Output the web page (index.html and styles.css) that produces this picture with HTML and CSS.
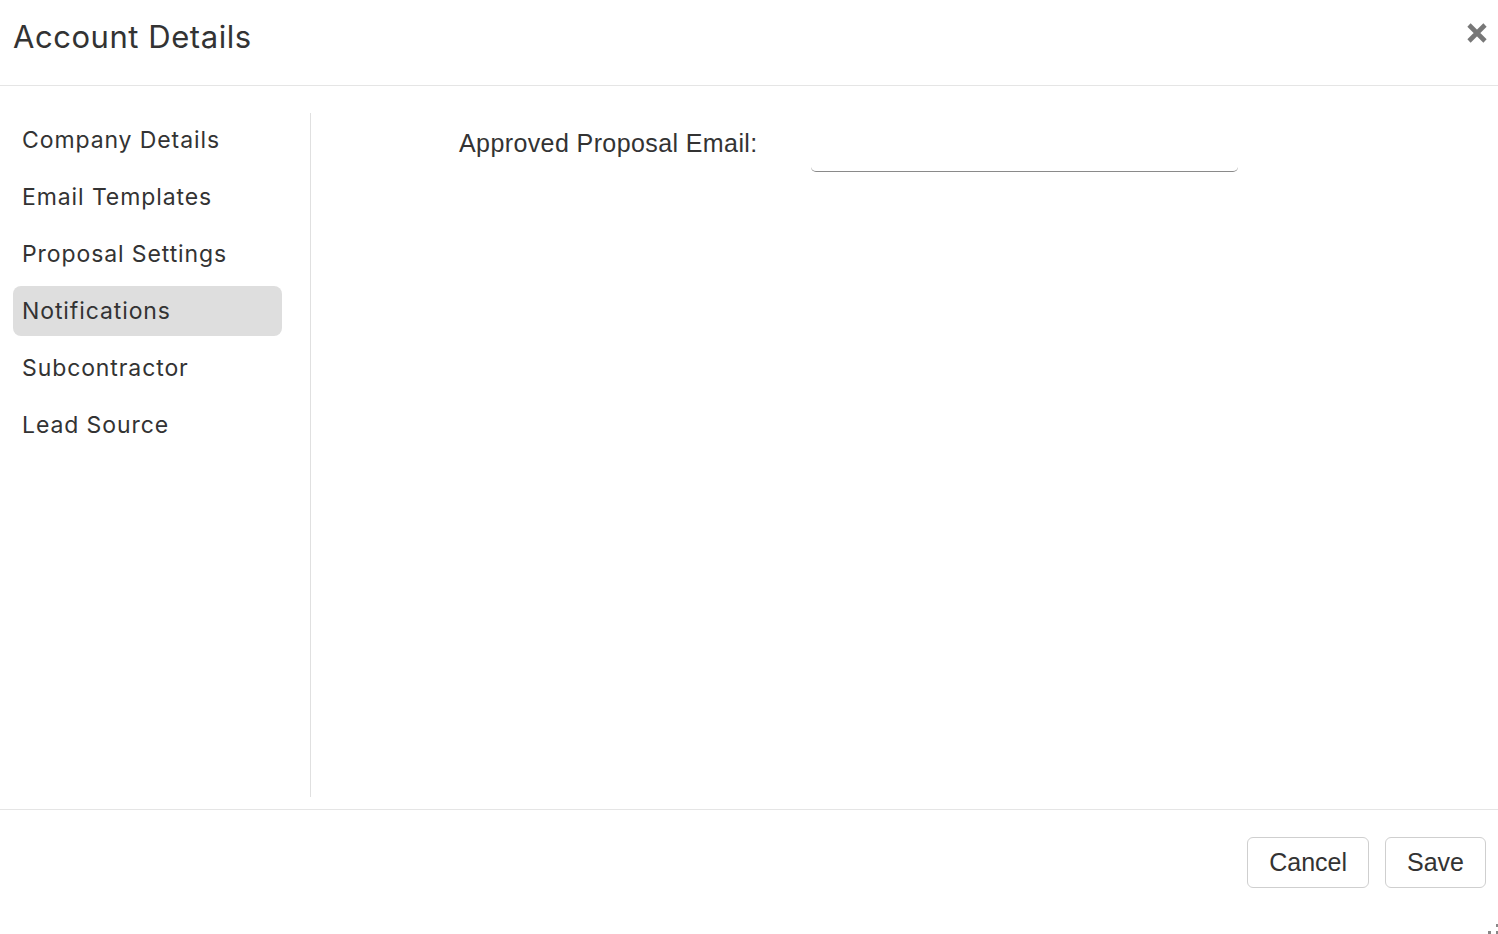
FILE: index.html
```html
<!DOCTYPE html>
<html lang="en">
<head>
<meta charset="utf-8">
<title>Account Details</title>
<link rel="stylesheet" href="styles.css">
</head>
<body>
<div class="modal">
  <header class="modal-header">
    <h1 class="modal-title">Account Details</h1>
    <button class="close-btn" aria-label="Close">
      <svg viewBox="0 0 22 22" width="22" height="22"><path d="M3 3 L19 19 M19 3 L3 19" stroke="#777" stroke-width="4.6" stroke-linecap="butt" fill="none"/></svg>
    </button>
  </header>
  <div class="modal-body">
    <nav class="sidebar">
      <ul class="nav-list">
        <li class="nav-item">Company Details</li>
        <li class="nav-item">Email Templates</li>
        <li class="nav-item">Proposal Settings</li>
        <li class="nav-item active">Notifications</li>
        <li class="nav-item">Subcontractor</li>
        <li class="nav-item">Lead Source</li>
      </ul>
    </nav>
    <section class="content">
      <div class="form-row">
        <label class="form-label" for="approved-email">Approved Proposal Email:</label>
        <input class="form-input" id="approved-email" type="text">
      </div>
    </section>
  </div>
  <footer class="modal-footer">
    <button class="btn">Cancel</button>
    <button class="btn">Save</button>
    <span class="grip"></span>
  </footer>
</div>
</body>
</html>
```

FILE: styles.css
```css
html, body {
  margin: 0;
  padding: 0;
  background: #fff;
}
body {
  font-family: Inter, "Noto Sans", sans-serif;
  color: #333;
}
.modal {
  width: 1498px;
  height: 934px;
  display: flex;
  flex-direction: column;
  overflow: hidden;
}
.modal-header {
  height: 85px;
  border-bottom: 1px solid #e5e5e5;
  display: flex;
  justify-content: space-between;
  align-items: flex-start;
  padding: 0 10px 0 13px;
  flex: none;
}
.modal-title {
  margin: 0;
  font-size: 31px;
  letter-spacing: 0.55px;
  font-weight: 400;
  line-height: 36px;
  margin-top: 19px;
  color: #333;
}
.close-btn {
  margin-top: 22px;
  border: 0;
  background: none;
  padding: 0;
  width: 22px;
  height: 22px;
  cursor: pointer;
}
.close-btn svg { display: block; }
.modal-body {
  flex: 1;
  display: flex;
  min-height: 0;
}
.sidebar {
  width: 269px;
  padding: 2px 28px 0 13px;
  margin: 27px 0 12px 0;
  border-right: 1px solid #e0e0e0;
  flex: none;
  box-sizing: content-box;
}
.nav-list {
  list-style: none;
  margin: 0;
  padding: 0;
  display: flex;
  flex-direction: column;
  gap: 7px;
  width: 269px;
}
.nav-item {
  height: 50px;
  line-height: 50px;
  padding-left: 9px;
  font-size: 23px;
  letter-spacing: 0.9px;
  border-radius: 8px;
  color: #333;
}
.nav-item.active {
  background: #dedede;
}
.content {
  flex: 1;
  padding: 42px 0 0 148px;
}
.form-row {
  display: flex;
  align-items: flex-start;
}
.form-label {
  width: 352px;
  font-family: "Liberation Sans", Arial, sans-serif;
  font-size: 25px;
  letter-spacing: 0.4px;
  line-height: 30px;
  color: #333;
}
.form-input {
  width: 427px;
  height: 44px;
  box-sizing: border-box;
  border: 0;
  border-bottom: 1px solid #8a8a8a;
  border-radius: 0 0 5px 5px;
  outline: none;
  background: transparent;
  font-size: 22px;
  padding: 0 8px;
}
.modal-footer {
  height: 125px;
  border-top: 1px solid #e5e5e5;
  flex: none;
  display: flex;
  justify-content: flex-end;
  align-items: flex-start;
  gap: 16px;
  padding: 27px 12px 0 0;
  box-sizing: border-box;
  position: relative;
}
.btn {
  height: 51px;
  padding: 0 21px;
  border: 1px solid #cfcfcf;
  border-radius: 6px;
  background: #fff;
  font-family: "Liberation Sans", Arial, sans-serif;
  font-size: 25px;
  color: #333;
  cursor: pointer;
}
.grip {
  position: absolute;
  right: 0;
  bottom: 0;
  width: 10px;
  height: 10px;
  background:
    linear-gradient(#888, #888) 8px 0 / 2px 3px no-repeat,
    linear-gradient(#888, #888) 0 7px / 3px 3px no-repeat,
    linear-gradient(#888, #888) 8px 7px / 2px 3px no-repeat;
}
```
